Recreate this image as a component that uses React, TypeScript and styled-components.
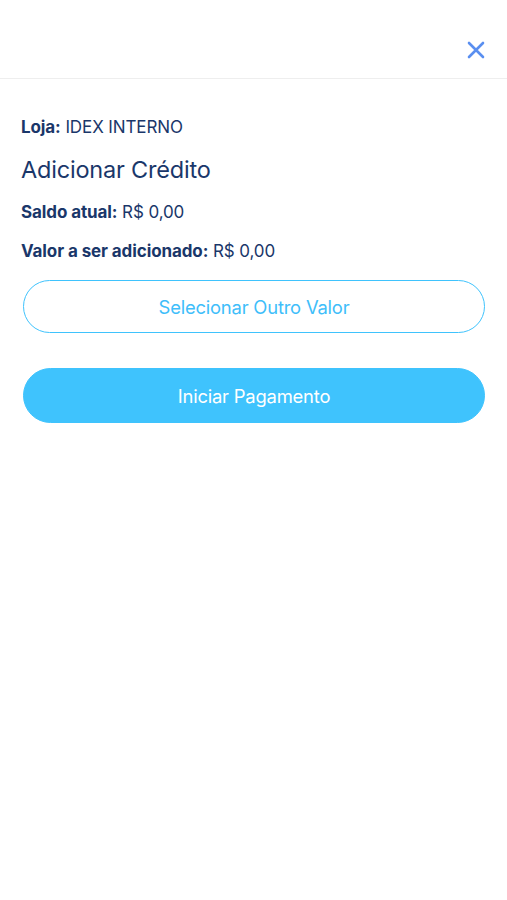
import React from "react";
import styled, { createGlobalStyle } from "styled-components";

const Global = createGlobalStyle`
  html, body { margin: 0; padding: 0; background: #ffffff; }
  body { font-family: Inter, "Noto Sans", "Liberation Sans", sans-serif; -webkit-font-smoothing: antialiased; }
`;

const Page = styled.div`
  width: 507px;
  min-height: 900px;
  background: #fff;
  display: flex;
  flex-direction: column;
`;

const Header = styled.header`
  height: 79px;
  border-bottom: 1px solid #eeeeee;
  display: flex;
  align-items: flex-end;
  justify-content: flex-end;
  padding: 0 19px 16px 0;
  box-sizing: border-box;
`;

const CloseButton = styled.button`
  width: 24px;
  height: 24px;
  border: none;
  background: none;
  padding: 0;
  display: flex;
  align-items: center;
  justify-content: center;
  cursor: pointer;
`;

const Content = styled.main`
  display: flex;
  flex-direction: column;
  padding: 38px 22px 0 21px;
`;

const InfoLine = styled.div<{ $gap: number }>`
  font-size: 17px;
  line-height: 20px;
  color: #1a376a;
  margin-bottom: ${(p) => p.$gap}px;
  letter-spacing: -0.1px;
`;

const Label = styled.span`
  font-weight: 700;
`;

const Title = styled.h1`
  margin: 0 0 18px;
  font-size: 23.5px;
  line-height: 28px;
  font-weight: 400;
  color: #1a376a;
  letter-spacing: -0.2px;
`;

const PillButton = styled.button<{ $filled?: boolean }>`
  margin: 0 0 0 2px;
  height: ${(p) => (p.$filled ? 55 : 53)}px;
  border-radius: 28px;
  border: 1.5px solid #3fc3fd;
  background: ${(p) => (p.$filled ? "#3fc3fd" : "#ffffff")};
  color: ${(p) => (p.$filled ? "#ffffff" : "#3fbefa")};
  font-family: Inter, "Noto Sans", "Liberation Sans", sans-serif;
  font-size: 18.4px;
  font-weight: 400;
  letter-spacing: -0.2px;
  cursor: pointer;
  & + & {
    margin-top: 35px;
  }
`;

export default function App() {
  return (
    <Page>
      <Global />
      <Header>
        <CloseButton aria-label="Fechar">
          <svg width="18" height="18" viewBox="0 0 18 18">
            <path d="M2 2L16 16M16 2L2 16" stroke="#5a8ff0" strokeWidth="2.6" strokeLinecap="round" />
          </svg>
        </CloseButton>
      </Header>
      <Content>
        <InfoLine $gap={19}>
          <Label>Loja:</Label> IDEX INTERNO
        </InfoLine>
        <Title>Adicionar Crédito</Title>
        <InfoLine $gap={19}>
          <Label>Saldo atual:</Label> R$ 0,00
        </InfoLine>
        <InfoLine $gap={19}>
          <Label>Valor a ser adicionado:</Label> R$ 0,00
        </InfoLine>
        <PillButton>Selecionar Outro Valor</PillButton>
        <PillButton $filled>Iniciar Pagamento</PillButton>
      </Content>
    </Page>
  );
}
